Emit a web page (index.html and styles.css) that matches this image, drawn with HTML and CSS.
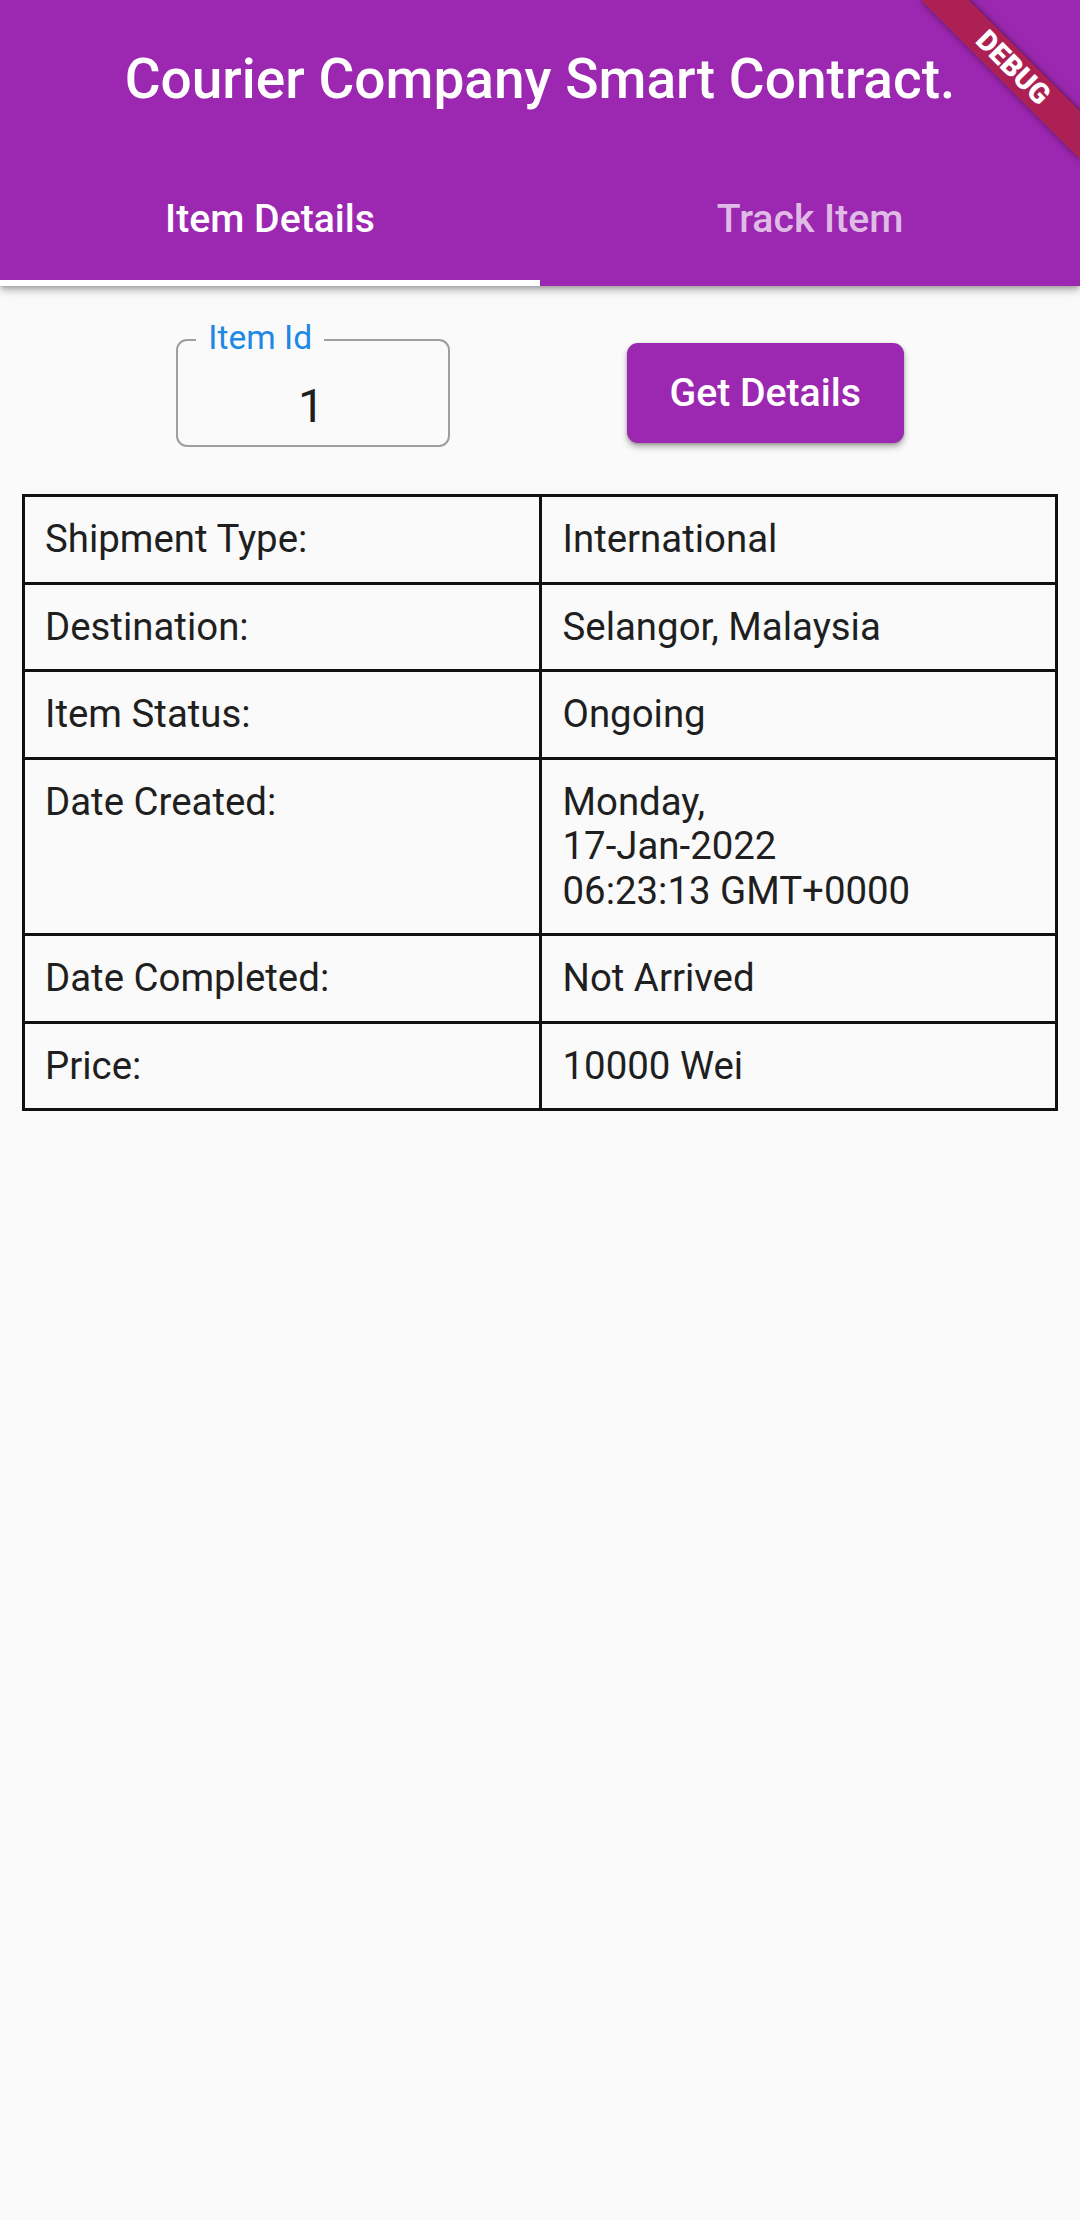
FILE: index.html
```html
<!DOCTYPE html>
<html>
<head>
<meta charset="utf-8">
<link rel="stylesheet" href="styles.css">
</head>
<body>
<div class="screen">
  <header class="app-bar">
    <div class="toolbar"><h1 class="title">Courier Company Smart Contract.</h1></div>
    <nav class="tabs">
      <div class="tab active"><span>Item Details</span></div>
      <div class="tab"><span>Track Item</span></div>
    </nav>
  </header>
  <main class="content">
    <div class="controls">
      <div class="field">
        <span class="field-label">Item Id</span>
        <span class="field-value">1</span>
      </div>
      <button class="btn">Get Details</button>
    </div>
    <div class="table">
      <div class="cell">Shipment Type:</div><div class="cell">International</div>
      <div class="cell">Destination:</div><div class="cell">Selangor, Malaysia</div>
      <div class="cell">Item Status:</div><div class="cell">Ongoing</div>
      <div class="cell">Date Created:</div><div class="cell">Monday,<br>17-Jan-2022<br>06:23:13 GMT+0000</div>
      <div class="cell">Date Completed:</div><div class="cell">Not Arrived</div>
      <div class="cell">Price:</div><div class="cell">10000 Wei</div>
    </div>
  </main>
  <div class="debug-banner">DEBUG</div>
</div>
</body>
</html>
```
FILE: styles.css
```css
html, body {
  margin: 0;
  padding: 0;
  height: 100%;
  background: #fafafa;
}
body {
  font-family: Roboto, "Noto Sans", sans-serif;
  color: #1f1f1f;
}
.screen {
  position: relative;
  width: 1080px;
  height: 2220px;
  overflow: hidden;
  background: #fafafa;
}
.app-bar {
  background: #9c27b0;
  box-shadow: 0 3px 4px -1px rgba(0,0,0,0.2), 0 5px 7px 0 rgba(0,0,0,0.14), 0 2px 14px 0 rgba(0,0,0,0.12);
  position: relative;
  z-index: 1;
}
.toolbar {
  height: 157px;
  display: flex;
  align-items: center;
  justify-content: center;
}
.title {
  margin: 0;
  font-size: 55px;
  font-weight: 500;
  color: #fff;
  letter-spacing: 0;
}
.tabs {
  display: flex;
  height: 129px;
}
.tab {
  flex: 1;
  display: flex;
  align-items: center;
  justify-content: center;
  box-sizing: border-box;
  padding-bottom: 6px;
  font-size: 39.2px;
  font-weight: 500;
  color: rgba(255,255,255,0.7);
}
.tab.active {
  color: #fff;
  border-bottom: 6px solid #fff;
  padding-bottom: 0;
}
.content {
  padding-top: 53px;
}
.controls {
  display: flex;
  justify-content: space-evenly;
  align-items: center;
}
.field {
  position: relative;
  width: 274px;
  height: 108px;
  box-sizing: border-box;
  border: 2.8px solid #9e9e9e;
  border-radius: 11px;
  display: flex;
  justify-content: center;
  align-items: flex-end;
  padding-right: 4px;
  padding-bottom: 12px;
}
.field-label {
  position: absolute;
  left: 18px;
  top: -23px;
  padding: 0 12px;
  background: #fafafa;
  color: #1e88e5;
  font-size: 33.6px;
  line-height: 40px;
}
.field-value {
  font-size: 47px;
  line-height: 55px;
  color: #1f1f1f;
}
.btn {
  width: 277px;
  height: 100px;
  border: none;
  border-radius: 11px;
  background: #9c27b0;
  color: #fff;
  font-family: Roboto, "Noto Sans", sans-serif;
  font-size: 39.2px;
  font-weight: 500;
  box-shadow: 0 4px 6px rgba(0,0,0,0.3), 0 1px 3px rgba(0,0,0,0.2);
  padding: 0;
}
.table {
  margin: 47px 22px 0;
  display: grid;
  grid-template-columns: 1fr 1fr;
  gap: 3px;
  padding: 3px;
  background: #111;
}
.cell {
  background: #fafafa;
  padding: 20px 20px;
  font-size: 38.4px;
  line-height: 44.5px;
  color: #1f1f1f;
}
.cell:nth-child(even) {
  padding-left: 21px;
}
.debug-banner {
  position: absolute;
  left: 901px;
  top: 50.5px;
  width: 224px;
  height: 33.6px;
  line-height: 33.6px;
  transform: rotate(45deg);
  background: rgba(183,28,28,0.63);
  box-shadow: 0 0 6px rgba(0,0,0,0.5);
  color: #fff;
  font-size: 28.5px;
  font-weight: 900;
  text-align: center;
  z-index: 5;
}
```
